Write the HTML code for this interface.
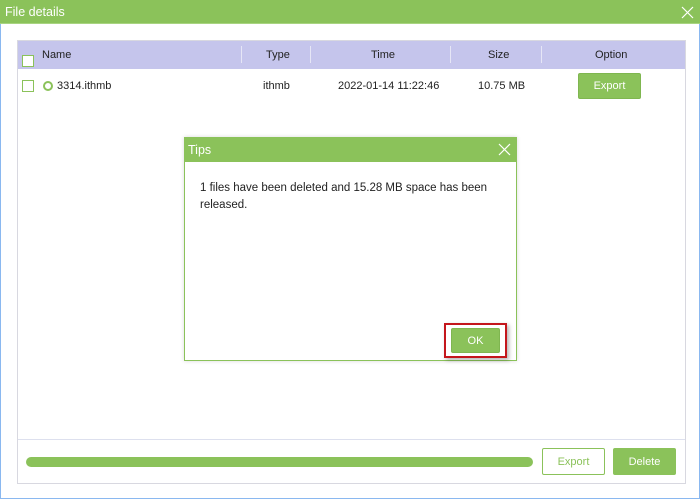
<!DOCTYPE html>
<html><head><style>
*{margin:0;padding:0;box-sizing:border-box}
body{width:700px;height:499px;background:#fff;font-family:"Segoe UI","Liberation Sans",sans-serif;font-size:11px;color:#222;position:relative;overflow:hidden}
.a{position:absolute}
</style></head><body>
<div class="a" style="left:0;top:0;width:700px;height:499px;border:1px solid #8ab8f0;border-top:none"></div>
<div class="a" style="left:0;top:0;width:700px;height:24px;background:#8bc25a;border-bottom:1px solid #a8d480"></div>
<div class="a" style="left:5px;top:5px;color:#fff;font-size:12.5px">File details</div>
<svg class="a" style="left:681px;top:6px" width="13" height="13"><path d="M1 1L12 12M12 1L1 12" stroke="#fff" stroke-width="1.2"/></svg>
<div class="a" style="left:17px;top:40px;width:669px;height:444px;border:1px solid #d8d8e0"></div>
<div class="a" style="left:18px;top:41px;width:667px;height:28px;background:#c5c5ec"></div>
<div class="a" style="left:22px;top:55px;width:12px;height:12px;border:1px solid #8bc25a;background:#fff"></div>
<div class="a" style="left:42px;top:49px">Name</div>
<div class="a" style="left:241px;top:46px;width:1px;height:17px;background:#e6e6f6"></div>
<div class="a" style="left:266px;top:49px">Type</div>
<div class="a" style="left:310px;top:46px;width:1px;height:17px;background:#e6e6f6"></div>
<div class="a" style="left:371px;top:49px">Time</div>
<div class="a" style="left:450px;top:46px;width:1px;height:17px;background:#e6e6f6"></div>
<div class="a" style="left:488px;top:49px">Size</div>
<div class="a" style="left:541px;top:46px;width:1px;height:17px;background:#e6e6f6"></div>
<div class="a" style="left:595px;top:49px">Option</div>
<div class="a" style="left:22px;top:80px;width:12px;height:12px;border:1px solid #8bc25a"></div>
<div class="a" style="left:43px;top:81px;width:10px;height:10px;border:2px solid #8bc25a;border-radius:50%"></div>
<div class="a" style="left:57px;top:80px">3314.ithmb</div>
<div class="a" style="left:263px;top:80px">ithmb</div>
<div class="a" style="left:338px;top:80px">2022-01-14 11:22:46</div>
<div class="a" style="left:478px;top:80px">10.75 MB</div>
<div class="a" style="left:578px;top:73px;width:63px;height:26px;background:#8bc25a;border:1px solid #7fb650;border-radius:2px;color:#fff;text-align:center;line-height:25px">Export</div>
<div class="a" style="left:18px;top:439px;width:667px;height:1px;background:#dde0ee"></div>
<div class="a" style="left:26px;top:457px;width:507px;height:10px;background:#8bc25a;border-radius:5px"></div>
<div class="a" style="left:542px;top:448px;width:63px;height:27px;border:1px solid #8bc25a;border-radius:2px;color:#8bc25a;text-align:center;line-height:27px">Export</div>
<div class="a" style="left:613px;top:448px;width:63px;height:27px;background:#8bc25a;border-radius:2px;color:#fff;text-align:center;line-height:28px">Delete</div>
<div class="a" style="left:184px;top:137px;width:333px;height:224px;background:#fff;border:1px solid #8bc25a;box-shadow:0 0 4px rgba(0,0,0,.15)"></div>
<div class="a" style="left:184px;top:137px;width:333px;height:25px;background:#8bc25a"></div>
<div class="a" style="left:188px;top:143px;color:#fff;font-size:12.5px">Tips</div>
<svg class="a" style="left:498px;top:143px" width="13" height="13"><path d="M1 1L12 12M12 1L1 12" stroke="#fff" stroke-width="1.2"/></svg>
<div class="a" style="left:200px;top:180px;width:310px;line-height:17px;font-size:11.5px">1 files have been deleted and 15.28 MB space has been released.</div>
<div class="a" style="left:444px;top:323px;width:63px;height:35px;border:2px solid #c4161c;box-shadow:2px 2px 4px rgba(0,0,0,.3)"></div>
<div class="a" style="left:451px;top:328px;width:49px;height:25px;background:#8bc25a;border:1px solid #7fb650;border-radius:2px;color:#fff;text-align:center;line-height:25px">OK</div>
</body></html>
